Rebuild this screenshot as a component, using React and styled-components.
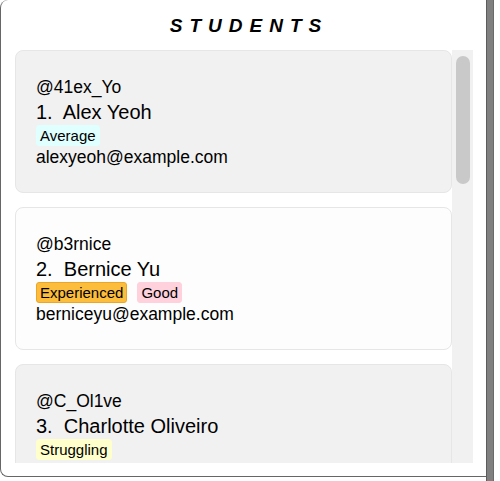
import styled, { createGlobalStyle } from 'styled-components';

const students = [
  { handle: '@41ex_Yo', name: 'Alex Yeoh', email: 'alexyeoh@example.com', tags: ['Average'] },
  { handle: '@b3rnice', name: 'Bernice Yu', email: 'berniceyu@example.com', tags: ['Experienced', 'Good'] },
  { handle: '@C_Ol1ve', name: 'Charlotte Oliveiro', email: 'charlotte@example.com', tags: ['Struggling'] },
];

const tagColors = {
  Average: { bg: '#e0ffff', border: '#e0ffff' },
  Experienced: { bg: '#fdbd3c', border: '#eaa62a' },
  Good: { bg: '#ffd1dc', border: '#ffd1dc' },
  Struggling: { bg: '#ffffcc', border: '#ffffcc' },
};

export default function App() {
  return (
    <>
      <GlobalStyle />
      <Frame>
        <Panel>
          <Title>STUDENTS</Title>
          <ListArea>
            <Viewport>
              {students.map((s, i) => (
                <Card key={s.handle} $alt={i % 2 === 1}>
                  <Handle>{s.handle}</Handle>
                  <Name>{`${i + 1}.  ${s.name}`}</Name>
                  <Tags>
                    {s.tags.map((t) => (
                      <Tag key={t} $bg={tagColors[t].bg} $border={tagColors[t].border}>
                        {t}
                      </Tag>
                    ))}
                  </Tags>
                  <Email>{s.email}</Email>
                </Card>
              ))}
            </Viewport>
            <ScrollTrack>
              <ScrollThumb />
            </ScrollTrack>
          </ListArea>
        </Panel>
        <EdgeBar />
      </Frame>
    </>
  );
}

const GlobalStyle = createGlobalStyle`
  body {
    margin: 0;
    background: #ffffff;
    font-family: "Liberation Sans", Arial, sans-serif;
    color: #000;
  }
`;

const Frame = styled.div`
  display: flex;
  align-items: flex-start;
  width: 500px;
  height: 481px;
  overflow: hidden;
`;

const Panel = styled.section`
  box-sizing: border-box;
  width: 486px;
  height: 477px;
  border-left: 1px solid #666;
  border-bottom: 1px solid #666;
  border-top-left-radius: 8px;
  border-bottom-left-radius: 8px;
  background: #fff;
  padding: 14px 13px 0 14px;
  display: flex;
  flex-direction: column;
`;

const EdgeBar = styled.div`
  box-sizing: border-box;
  width: 8px;
  height: 481px;
  background: #808080;
  border-left: 1px solid #5c5c5c;
  border-right: 1px solid #6a6a6a;
`;

const Title = styled.h1`
  margin: 0 0 12px;
  padding-left: 10px;
  height: 24px;
  line-height: 24px;
  text-align: center;
  font-size: 19px;
  font-weight: bold;
  font-style: italic;
  letter-spacing: 7px;
`;

const ListArea = styled.div`
  display: flex;
  height: 413px;
`;

const Viewport = styled.div`
  flex: 1;
  overflow: hidden;
  display: flex;
  flex-direction: column;
  gap: 14px;
`;

const ScrollTrack = styled.div`
  width: 21px;
  flex-shrink: 0;
  background: #f1f1f1;
  padding: 6px 3px 0 4px;
  box-sizing: border-box;
`;

const ScrollThumb = styled.div`
  height: 128px;
  border-radius: 7px;
  background: #c9c9c9;
`;

const Card = styled.div`
  flex-shrink: 0;
  box-sizing: border-box;
  border: 1px solid #e6e6e6;
  border-radius: 8px;
  background: ${(p) => (p.$alt ? '#fdfdfd' : '#f1f1f1')};
  padding: 26px 20px 25px;
  display: flex;
  flex-direction: column;
  align-items: flex-start;
`;

const Handle = styled.div`
  font-size: 17.5px;
  line-height: 20px;
`;

const Name = styled.div`
  margin-top: 3px;
  font-size: 20px;
  line-height: 24px;
  white-space: pre;
`;

const Tags = styled.div`
  display: flex;
  gap: 10px;
  margin-top: 1px;
`;

const Tag = styled.span`
  box-sizing: border-box;
  height: 21px;
  line-height: 19px;
  padding: 0 3px;
  font-size: 15px;
  background: ${(p) => p.$bg};
  border: 1px solid ${(p) => p.$border};
  border-radius: 3px;
`;

const Email = styled.div`
  margin-top: 1px;
  font-size: 17.5px;
  line-height: 20px;
`;
